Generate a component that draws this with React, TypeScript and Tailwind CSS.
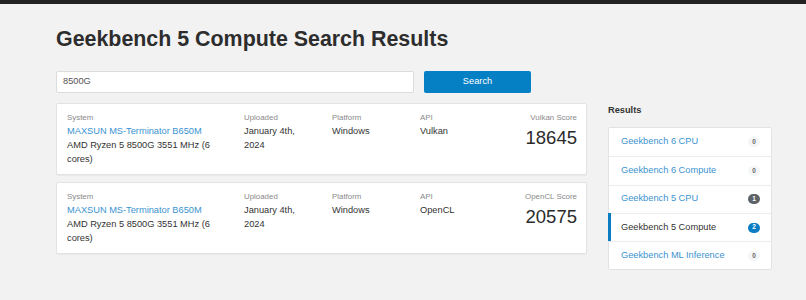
import React from "react";

type Row = {
  system: string;
  cpu: string;
  uploaded: string;
  platform: string;
  api: string;
  scoreLabel: string;
  score: string;
};

const rows: Row[] = [
  {
    system: "MAXSUN MS-Terminator B650M",
    cpu: "AMD Ryzen 5 8500G 3551 MHz (6 cores)",
    uploaded: "January 4th, 2024",
    platform: "Windows",
    api: "Vulkan",
    scoreLabel: "Vulkan Score",
    score: "18645",
  },
  {
    system: "MAXSUN MS-Terminator B650M",
    cpu: "AMD Ryzen 5 8500G 3551 MHz (6 cores)",
    uploaded: "January 4th, 2024",
    platform: "Windows",
    api: "OpenCL",
    scoreLabel: "OpenCL Score",
    score: "20575",
  },
];

type Item = { name: string; count: string; kind: "zero" | "dark" | "active" };

const items: Item[] = [
  { name: "Geekbench 6 CPU", count: "0", kind: "zero" },
  { name: "Geekbench 6 Compute", count: "0", kind: "zero" },
  { name: "Geekbench 5 CPU", count: "1", kind: "dark" },
  { name: "Geekbench 5 Compute", count: "2", kind: "active" },
  { name: "Geekbench ML Inference", count: "0", kind: "zero" },
];

function Label({ children }: { children: React.ReactNode }) {
  return <div className="text-[7.9px] leading-[12px] text-[#8a8a8a]">{children}</div>;
}

function ResultCard({ r }: { r: Row }) {
  return (
    <div className="flex bg-white border border-[#e3e3e3] rounded-[2px] shadow-[0_1px_1px_rgba(0,0,0,0.04)] pl-[10px] pr-[9px] pt-[8px] pb-[8px]">
      <div className="w-[177px] pr-[20px]">
        <Label>System</Label>
        <div className="text-[9.25px] leading-[14px] text-[#3a93d0]">{r.system}</div>
        <div className="text-[9.25px] leading-[14px] text-[#333]">{r.cpu}</div>
      </div>
      <div className="w-[88px] pr-[18px]">
        <Label>Uploaded</Label>
        <div className="text-[9.25px] leading-[14px] text-[#333]">{r.uploaded}</div>
      </div>
      <div className="w-[88px] pr-[10px]">
        <Label>Platform</Label>
        <div className="text-[9.25px] leading-[14px] text-[#333]">{r.platform}</div>
      </div>
      <div className="w-[88px] pr-[10px]">
        <Label>API</Label>
        <div className="text-[9.25px] leading-[14px] text-[#333]">{r.api}</div>
      </div>
      <div className="flex-1 text-right">
        <Label>{r.scoreLabel}</Label>
        <div className="text-[18.5px] leading-[28px] text-[#2b2b2b]">{r.score}</div>
      </div>
    </div>
  );
}

function Badge({ kind, count }: { kind: Item["kind"]; count: string }) {
  const cls =
    kind === "active"
      ? "bg-[#0a7cc1] text-white"
      : kind === "dark"
      ? "bg-[#5f6468] text-white"
      : "bg-[#f3f5f7] text-[#6b6b6b]";
  return (
    <span
      className={
        "inline-flex items-center justify-center min-w-[12px] h-[10px] px-[3px] rounded-full text-[6.5px] font-bold leading-none " +
        cls
      }
    >
      {count}
    </span>
  );
}

export default function App() {
  return (
    <div className="min-h-screen bg-[#f2f2f2] font-['Liberation_Sans',Arial,sans-serif]">
      <div className="h-[4px] bg-[#232323]" />
      <div className="pl-[56px] w-[772px]">
        <h1 className="mt-[23px] text-[21.4px] leading-[25px] font-bold text-[#2d2d2d]">
          Geekbench 5 Compute Search Results
        </h1>
        <div className="mt-[19px] flex gap-[10px] w-[475px]">
          <div className="w-[358px] h-[22px] bg-white border border-[#dcdcdc] rounded-[2px] flex items-center pl-[6px] text-[9.25px] text-[#555]">
            8500G
          </div>
          <button className="w-[107px] h-[22px] bg-[#0580c4] rounded-[2px] text-white text-[9.25px] flex items-center justify-center">
            Search
          </button>
        </div>
        <div className="mt-[10px] flex gap-[21px]">
          <div className="w-[531px] flex flex-col gap-[7px]">
            {rows.map((r, i) => (
              <ResultCard key={i} r={r} />
            ))}
          </div>
          <div className="w-[164px]">
            <div className="text-[9.25px] leading-[14px] font-bold text-[#333]">Results</div>
            <div className="mt-[10px] bg-white border border-[#e3e3e3] rounded-[2px]">
              {items.map((it, i) => (
                <div
                  key={i}
                  className={
                    "relative flex items-center justify-between h-[28.3px] pl-[12px] pr-[11px] text-[9.25px] " +
                    (i > 0 ? "border-t border-[#ececec] " : "") +
                    (it.kind === "active" ? "text-[#333]" : "text-[#3a93d0]")
                  }
                >
                  {it.kind === "active" && (
                    <span className="absolute left-[-1px] top-[-1px] bottom-0 w-[3px] bg-[#0a7cc1]" />
                  )}
                  <span>{it.name}</span>
                  <Badge kind={it.kind} count={it.count} />
                </div>
              ))}
            </div>
          </div>
        </div>
      </div>
    </div>
  );
}
